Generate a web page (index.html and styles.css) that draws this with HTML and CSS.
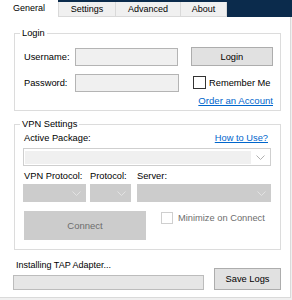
FILE: index.html
```html
<!DOCTYPE html>
<html>
<head>
<meta charset="utf-8">
<link rel="stylesheet" href="styles.css">
</head>
<body>
<div class="window">
  <div class="tabs">
    <div class="tab active tab-general">General</div>
    <div class="tab tab-settings">Settings</div>
    <div class="tab tab-advanced">Advanced</div>
    <div class="tab tab-about">About</div>
    <div class="tab-fill"></div>
  </div>
  <div class="panel">
    <div class="group login">
      <span class="legend">Login</span>
      <div class="row r1">
        <span class="lbl">Username:</span>
        <div class="input"></div>
        <button class="btn login-btn">Login</button>
      </div>
      <div class="row r2">
        <span class="lbl">Password:</span>
        <div class="input"></div>
        <div class="check"><span class="box"></span><span>Remember Me</span></div>
      </div>
      <div class="row r3"><a class="link order">Order an Account</a></div>
    </div>

    <div class="group vpn">
      <span class="legend">VPN Settings</span>
      <div class="pkg-head">
        <span class="lbl">Active Package:</span>
        <a class="link howto">How to Use?</a>
      </div>
      <div class="combo combo-pkg">
        <div class="combo-inner"></div>
        <svg class="chev" width="9" height="5" viewBox="0 0 9 5"><polyline points="0.5,0.5 4.5,4.5 8.5,0.5" fill="none" stroke="#b0b0b0" stroke-width="1"/></svg>
      </div>
      <div class="selects">
        <div class="sel sel-vpn">
          <span class="lbl">VPN Protocol:</span>
          <div class="combo combo-dis">
            <svg class="chev" width="9" height="5" viewBox="0 0 9 5"><polyline points="0.5,0.5 4.5,4.5 8.5,0.5" fill="none" stroke="#e2e2e2" stroke-width="1"/></svg>
          </div>
        </div>
        <div class="sel sel-proto">
          <span class="lbl">Protocol:</span>
          <div class="combo combo-dis">
            <svg class="chev" width="9" height="5" viewBox="0 0 9 5"><polyline points="0.5,0.5 4.5,4.5 8.5,0.5" fill="none" stroke="#e2e2e2" stroke-width="1"/></svg>
          </div>
        </div>
        <div class="sel sel-server">
          <span class="lbl">Server:</span>
          <div class="combo combo-dis">
            <svg class="chev" width="9" height="5" viewBox="0 0 9 5"><polyline points="0.5,0.5 4.5,4.5 8.5,0.5" fill="none" stroke="#e2e2e2" stroke-width="1"/></svg>
          </div>
        </div>
      </div>
      <div class="connect-row">
        <button class="btn connect-btn">Connect</button>
        <div class="check dis"><span class="box"></span><span>Minimize on Connect</span></div>
      </div>
    </div>

    <div class="status-row">
      <div class="status-left">
        <div class="status-text">Installing TAP Adapter...</div>
        <div class="progress"></div>
      </div>
      <button class="btn save-btn">Save Logs</button>
    </div>
  </div>
</div>
</body>
</html>
```
FILE: styles.css
```css
* { box-sizing: border-box; }
html, body { margin: 0; padding: 0; }
body {
  background: #f0f0f0;
  font-family: "Liberation Sans", Arial, sans-serif;
  font-size: 9.3px;
  color: #000;
  width: 292px;
  height: 300px;
  overflow: hidden;
}
.window { width: 292px; }

/* tabs */
.tabs {
  display: flex;
  height: 17px;
  background: #0b2b4c;
}
.tab {
  height: 15px;
  margin-top: 2px;
  background: #f0f0f0;
  border-left: 1px solid #d9d9d9;
  border-bottom: 1px solid #d9d9d9;
  text-align: center;
  line-height: 15px;
  font-size: 9px;
  color: #000;
}
.tab.active {
  height: 17px;
  margin-top: 0;
  background: #fff;
  border: none;
  line-height: 17px;
}
.tab-general { width: 58px; }
.tab-settings { width: 57px; }
.tab-advanced { width: 65px; }
.tab-about { width: 47px; border-right: 1px solid #d9d9d9; }
.tab-fill { flex: 1; }

/* panel */
.panel {
  width: 291px;
  height: 281px;
  background: #fff;
  border-right: 1px solid #dadada;
  border-bottom: 1px solid #dadada;
  padding-top: 16px;
}
.group {
  position: relative;
  width: 267px;
  margin-left: 14px;
  border: 1px solid #dcdcdc;
}
.legend {
  position: absolute;
  top: -7px;
  left: 5px;
  padding: 0 2px;
  background: #fff;
  line-height: 12px;
}
.lbl { line-height: 12px; white-space: nowrap; }

/* login */
.login { padding: 13px 7px 3px 9px; }
.row { display: flex; align-items: center; height: 19px; }
.r1 .lbl, .r2 .lbl { width: 51px; }
.r2 { margin-top: 7px; }
.r3 { margin-top: 3px; height: 12px; justify-content: flex-end; }
.input {
  width: 104px;
  height: 18px;
  background: #f0f0f0;
  border: 1px solid #b4b4b4;
}
.btn {
  font-family: inherit;
  font-size: 9.3px;
  padding: 0;
  margin: 0;
  color: #000;
  background: #e1e1e1;
  border: 1px solid #adadad;
  border-radius: 0;
}
.login-btn { width: 83px; height: 19px; margin-left: 13px; }
.check { display: flex; align-items: center; white-space: nowrap; line-height: 12px; }
.r2 .check { margin-left: 14px; }
.box {
  width: 13px;
  height: 13px;
  border: 1px solid #333;
  background: #fff;
  margin-right: 3px;
}
.link {
  color: #0066cc;
  text-decoration: underline;
  line-height: 12px;
  cursor: pointer;
}
.order { font-size: 9.6px; }

/* vpn */
.vpn { margin-top: 13px; padding: 7px 9px 9px 8px; }
.pkg-head {
  display: flex;
  justify-content: space-between;
  height: 12px;
  padding-left: 1px;
  padding-right: 3px;
}
.combo {
  display: flex;
  align-items: center;
  justify-content: flex-end;
  height: 18px;
}
.combo-pkg {
  margin-top: 4px;
  border: 1px solid #cfcfcf;
  background: #fff;
  padding: 1px;
}
.combo-inner { flex: 1; height: 13px; background: #f0f0f0; }
.combo-pkg .chev { margin: 0 4px 0 5px; }
.combo-dis {
  background: #cccccc;
  border: 1px solid #cccccc;
  padding-right: 4px;
}
.selects { display: flex; margin-top: 4px; }
.sel { display: flex; flex-direction: column; }
.sel .lbl { height: 12px; margin-bottom: 2px; }
.sel-vpn { width: 63px; }
.sel-vpn .lbl { padding-left: 1px; }
.sel-proto { width: 41px; margin-left: 4px; }
.sel-server { width: 134px; margin-left: 6px; }
.connect-row { display: flex; align-items: flex-start; margin-top: 9px; }
.connect-btn {
  width: 122px;
  height: 29px;
  margin-left: 1px;
  background: #cccccc;
  border-color: #cccccc;
  color: #6d6d6d;
  font-size: 9.5px;
}
.connect-row .check { margin-left: 15px; margin-top: 1px; color: #6d6d6d; }
.check.dis .box { border-color: #cfcfcf; width: 12px; height: 12px; margin-right: 5px; }

/* status */
.status-row { display: flex; align-items: flex-end; margin-top: 9px; margin-left: 13px; }
.status-left { width: 191px; }
.status-text { font-size: 9px; line-height: 12px; padding-left: 3px; color: #000; }
.progress {
  margin-top: 4px;
  height: 15px;
  background: #e6e6e6;
  border: 1px solid #bcbcbc;
}
.save-btn { width: 67px; height: 22px; margin-left: 10px; }
```
